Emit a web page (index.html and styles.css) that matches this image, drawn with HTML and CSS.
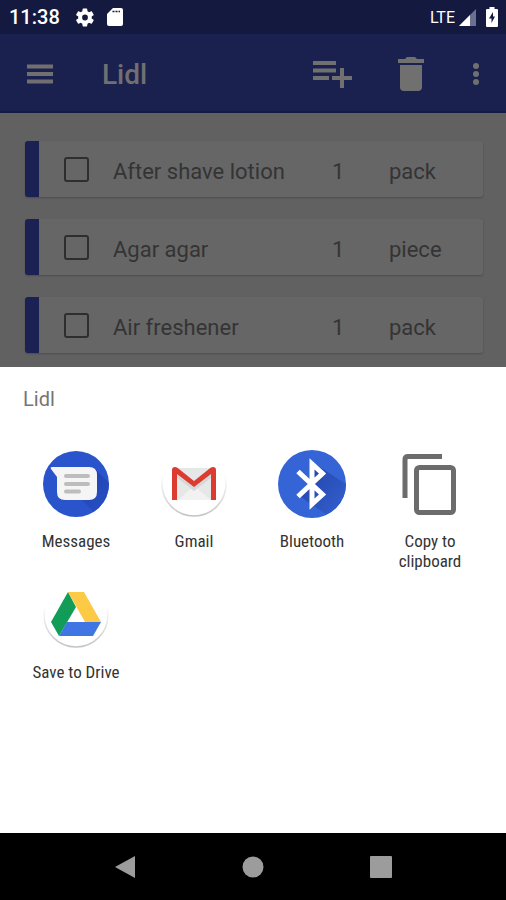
FILE: index.html
```html
<!DOCTYPE html>
<html lang="en">
<head>
<meta charset="utf-8">
<meta name="viewport" content="width=device-width, initial-scale=1">
<title>Lidl</title>
<link rel="stylesheet" href="styles.css">
</head>
<body>
<div class="status">
  <span class="clock">11:38</span>
  <svg class="gear" width="18" height="19" viewBox="2 2 20 20"><path fill="#fff" d="M19.4 13c0-.3.1-.6.1-1s0-.7-.1-1l2.100-1.600c.2-.2.200-.4.100-.6l-2-3.500c-.1-.2-.4-.3-.6-.2l-2.500 1c-.5-.4-1.100-.7-1.700-1l-.4-2.600c0-.2-.2-.5-.5-.5h-4c-.2 0-.5.200-.5.500L9 5.100c-.6.300-1.200.6-1.700 1l-2.500-1c-.2-.1-.5 0-.6.2l-2 3.500c-.1.200 0 .5.100.6L4.500 11c0 .3-.1.700-.1 1s0 .7.100 1l-2.200 1.600c-.1.200-.2.400-.1.600l2 3.500c.1.200.4.300.6.200l2.500-1c.5.400 1.100.7 1.700 1l.4 2.600c0 .300.2.500.5.500h4c.200 0 .5-.2.500-.5l.4-2.600c.6-.3 1.200-.6 1.700-1l2.500 1c.2.100.5 0 .6-.2l2-3.500c.1-.2.100-.5-.1-.6zM12 15.200a3.200 3.200 0 1 1 0-6.400 3.200 3.200 0 0 1 0 6.400z"/></svg>
  <svg class="card-icon" width="16" height="20" viewBox="0 0 16 20"><path fill="#fff" d="M6 1h8q2 0 2 2v14q0 2-2 2H2q-2 0-2-2V7z"/><path stroke="#14193f" stroke-width="1.500" stroke-dasharray="2 1" d="M5.500 4.500H13"/></svg>
  <span class="network">LTE</span>
  <svg width="17" height="17" viewBox="0 0 17 17"><path fill="#6c7090" d="M17 0v17H0z"/><path fill="#fff" d="M11 6v11H0z"/></svg>
  <svg class="battery" width="12" height="20" viewBox="0 0 12 20"><path fill="#fff" d="M3.500 0h5v2H11q1 0 1 1v16q0 1-1 1H1q-1 0-1-1V3q0-1 1-1h2.500z"/><path fill="#14193f" d="M7 5 3 11.500h2.500V16L9 9.500H7z"/></svg>
</div>

<header class="appbar">
  <button class="menu" aria-label="Menu"><svg width="26" height="20" viewBox="0 0 26 20"><path stroke="#707070" stroke-width="4" d="M0 2.500h26M0 10h26M0 17.500h26"/></svg></button>
  <h1>Lidl</h1>
  <button class="add" aria-label="Add items"><svg width="39" height="28" viewBox="0 0 39 28"><path fill="none" stroke="#707070" stroke-width="4" d="M0 3h23M0 10.500h23M0 18h16M19 18h20M29 8v20"/></svg></button>
  <button class="trash" aria-label="Delete"><svg width="26" height="34" viewBox="0 0 26 34"><path fill="#707070" d="M0 2h7l2-2h8l2 2h7v4H0zM2 8h22v22q0 4-4 4H6q-4 0-4-4z"/></svg></button>
  <button class="more" aria-label="More options"><svg width="6" height="24" viewBox="0 0 6 24"><g fill="#707070"><circle cx="3" cy="4" r="3"/><circle cx="3" cy="12" r="3"/><circle cx="3" cy="20" r="3"/></g></svg></button>
</header>

<main>
  <ul class="items">
    <li><input type="checkbox" id="i1"><label for="i1">After shave lotion</label><span class="qty">1</span><span class="unit">pack</span></li>
    <li><input type="checkbox" id="i2"><label for="i2">Agar agar</label><span class="qty">1</span><span class="unit">piece</span></li>
    <li><input type="checkbox" id="i3"><label for="i3">Air freshener</label><span class="qty">1</span><span class="unit">pack</span></li>
  </ul>
</main>

<section class="sheet">
  <h2>Lidl</h2>
  <div class="targets">
    <button>
      <svg width="68" height="68" viewBox="0 0 68 68">
        <defs><linearGradient id="ms" x1="0" y1="0" x2="1" y2="1"><stop offset="0" stop-color="#1c3ba4"/><stop offset="1" stop-color="#2a55cd"/></linearGradient><clipPath id="mc"><circle cx="34" cy="34" r="33"/></clipPath></defs>
        <circle cx="34" cy="34" r="33" fill="#2954cb"/>
        <path clip-path="url(#mc)" fill="url(#ms)" d="M8 18 60 70h20V46L53 19z"/>
        <path fill="#f5f5f5" d="M10 17h37q8 0 8 8v17q0 8-8 8H23q-8 0-8-8V27L9 19q-1-2 1-2z"/>
        <path stroke="#bdbdbd" stroke-width="4" stroke-linecap="round" d="M24 26h22M24 34h22M24 41.500h13"/>
      </svg>
      <span>Messages</span>
    </button>
    <button>
      <svg width="68" height="68" viewBox="0 0 68 68">
        <defs><linearGradient id="rim" x1="0" y1="0" x2="0" y2="1"><stop offset=".35" stop-color="#fff"/><stop offset="1" stop-color="#c4c4c4"/></linearGradient></defs>
        <circle cx="34" cy="34" r="32" fill="#fff" stroke="url(#rim)" stroke-width="1.500"/>
        <path fill="#e6e8e8" d="M15 18h39v32H15z"/>
        <path fill="#f2f2f2" d="m18 50 16-14 17 14z"/>
        <path fill="#d6d8d8" d="m16 21 18 15 18-15v6L34 41 16 27z"/>
        <path fill="#dc3b30" d="M12 50V20q0-3 3-3 2 0 4 2l15 12 15-12q2-2 4-2 3 0 3 3v30h-5V24L34 37 17 24v26z"/>
      </svg>
      <span>Gmail</span>
    </button>
    <button>
      <svg width="68" height="68" viewBox="0 0 68 68">
        <defs><linearGradient id="bs" x1="0" y1="0" x2="1" y2="1"><stop offset=".2" stop-color="#2548ae"/><stop offset="1" stop-color="#3462d2"/></linearGradient><clipPath id="bc"><circle cx="34" cy="34" r="34"/></clipPath></defs>
        <circle cx="34" cy="34" r="34" fill="#3564d6"/>
        <path clip-path="url(#bc)" fill="url(#bs)" d="m34 12 34 22v20L56 70 20 45l14-11z"/>
        <path fill="none" stroke="#fff" stroke-width="5" d="m20 21.500 24.500 23L34 54V14l10.500 9.500-24.500 23"/>
      </svg>
      <span>Bluetooth</span>
    </button>
    <button>
      <svg width="68" height="68" viewBox="0 0 68 68"><g fill="none" stroke="#6c6c6c" stroke-width="5"><path d="M46 6.500H12q-3 0-3 3V48"/><rect x="20.500" y="17.500" width="37" height="45" rx="3"/></g></svg>
      <span>Copy to clipboard</span>
    </button>
    <button>
      <svg width="68" height="68" viewBox="0 0 68 68">
        <circle cx="34" cy="34" r="32" fill="#fff" stroke="url(#rim)" stroke-width="1.500"/>
        <path fill="#119d58" d="M26 11 9 41l8 14 17-29z"/>
        <path fill="#fcca45" d="M26 11h16l17 30H43z"/>
        <path fill="#3f76e3" d="M25 41h34l-8 14H17z"/>
      </svg>
      <span>Save to Drive</span>
    </button>
  </div>
</section>

<nav class="keys">
  <button aria-label="Back"><svg width="22" height="24" viewBox="0 0 22 24"><path fill="#9c9c9c" d="M21 1v22L1 12z"/></svg></button>
  <button aria-label="Home"><svg width="22" height="22" viewBox="0 0 22 22"><circle cx="11" cy="11" r="10.500" fill="#9c9c9c"/></svg></button>
  <button aria-label="Recent apps"><svg width="22" height="22" viewBox="0 0 22 22"><rect width="22" height="22" rx="1" fill="#9c9c9c"/></svg></button>
</nav>
</body>
</html>
```
FILE: styles.css
```css
* {
  box-sizing: border-box;
}

body {
  margin: 0;
  min-height: 100vh;
  display: flex;
  flex-direction: column;
  background: #fff;
  font-family: Roboto, sans-serif;
}

button {
  padding: 0;
  border: 0;
  background: none;
  color: inherit;
  font: inherit;
}

svg {
  display: block;
  flex: none;
}

h1,
h2,
ul {
  margin: 0;
  padding: 0;
}

.status {
  display: flex;
  align-items: center;
  height: 34px;
  padding: 0 8px 0 9px;
  background: #14193f;
  color: #fff;
}

.clock {
  font-size: 20px;
  font-weight: 500;
}

.gear {
  margin-left: 16px;
}

.card-icon {
  margin-left: 13px;
}

.network {
  margin-left: auto;
  margin-right: 4px;
  font-size: 16px;
}

.battery {
  margin-left: 10px;
}

.appbar {
  display: flex;
  align-items: center;
  height: 79px;
  padding: 2px 27px 0;
  background: #1b214e;
  border-bottom: 2px solid #151a42;
  color: #707070;
}

.appbar h1 {
  flex: 1;
  margin-left: 49px;
  padding-top: 2px;
  font-size: 28px;
  font-weight: 500;
}

.trash {
  margin-left: 46px;
}

.more {
  margin-left: 49px;
}

main {
  padding: 28px 23px 14px 25px;
  background: #616161;
  color: #343434;
}

.items {
  display: grid;
  gap: 22px;
  list-style: none;
}

.items li {
  display: flex;
  align-items: center;
  height: 56px;
  padding-left: 25px;
  border-left: 14px solid #1b2153;
  border-radius: 3px;
  background: #666;
  box-shadow: 0 1px 2px #4c4c4c;
  font-size: 22px;
}

.items input {
  appearance: none;
  flex: none;
  width: 25px;
  height: 25px;
  margin: 0 24px 0 0;
  border: 2px solid #2e2e2e;
  border-radius: 3px;
}

.items label,
.items span {
  padding-top: 4px;
}

.items label {
  flex: 1;
}

.qty {
  width: 57px;
}

.unit {
  width: 94px;
}

.sheet {
  flex: 1;
  padding: 20px 17px;
  background: #fff;
}

.sheet h2 {
  margin: 0 6px 39px;
  color: #757575;
  font-size: 20px;
  font-weight: 400;
  line-height: 24px;
}

.targets {
  display: grid;
  grid-template-columns: repeat(4, 1fr);
  row-gap: 10px;
}

.targets button {
  display: flex;
  flex-direction: column;
  align-items: center;
  gap: 13px;
  padding: 0 12px;
  color: #333;
  font-family: "Roboto Condensed", Roboto, sans-serif;
  font-size: 17px;
  line-height: 20px;
}

.keys {
  display: flex;
  justify-content: center;
  align-items: center;
  gap: 106px;
  height: 67px;
  background: #000;
}
```
